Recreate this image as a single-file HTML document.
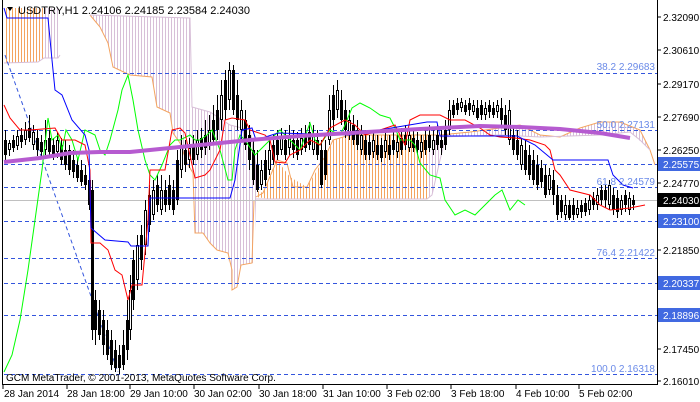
<!DOCTYPE html>
<html><head><meta charset="utf-8"><style>
html,body{margin:0;padding:0;background:#fff;width:700px;height:402px;overflow:hidden}
svg{display:block;font-family:"Liberation Sans",sans-serif}
</style></head><body>
<svg width="700" height="402" xmlns="http://www.w3.org/2000/svg">
<defs>
<pattern id="po" width="3" height="4" patternUnits="userSpaceOnUse"><rect x="0" y="0" width="1" height="4" fill="#f4a460"/></pattern>
<pattern id="pp" width="3" height="4" patternUnits="userSpaceOnUse"><rect x="0" y="0" width="1" height="4" fill="#d8bfd8"/></pattern>
</defs>
<rect width="700" height="402" fill="#fff"/>
<polygon points="4,8 44,8 44,58 38,62 4,63" fill="url(#po)"/>
<polygon points="44,8 58,8 58,58 44,58" fill="url(#pp)"/>
<polyline points="4,63 38,62 44,58 58,58 60,55" fill="none" stroke="#d8bfd8"/>
<polygon points="90,15 190,18 192,107 210,112 230,125 250,130 256,165 256,200 254,263 252,263 241,265 237,287 232,290 228,253 217,250 210,243 203,233 195,233 193,173 187,163 180,143 173,133 170,113 157,107 152,77 130,75 113,67 108,43 100,27" fill="url(#pp)"/>
<polyline points="90,15 100,27 108,43 113,67 130,75 152,77 157,107 170,113 173,133 180,143 187,163 193,173 195,233 203,233 210,243 217,250 228,253 232,270 232,290 237,287 241,265 252,263 254,200" fill="none" stroke="#f4a460"/>
<polyline points="90,15 190,18 192,107 210,112 230,125 250,130 256,165" fill="none" stroke="#d8bfd8"/>
<polygon points="256,190 263,193 277,160 290,177 307,187 325,157 333,140 350,135 427,135 427,199 270,199 256,197" fill="url(#po)"/>
<polyline points="256,197 263,193 277,160 287,163 293,187 307,187 315,170 325,157 333,140 350,135 427,135 440,135" fill="none" stroke="#f4a460"/>
<polyline points="256,199 427,199 432,195 440,160 445,140" fill="none" stroke="#d8bfd8"/>
<polygon points="427,199 432,195 440,160 445,140 427,140" fill="url(#pp)"/>
<polygon points="440,135 470,132 500,128 520,125 540,135 560,137 580,128 600,122 620,122 640,130 650,150 655,165 650,150 630,132 600,135 540,137 500,135 440,137" fill="url(#pp)"/>
<polyline points="440,135 470,132 500,128 520,125 540,135 560,137 580,128 600,122 620,122 640,130 650,150 655,165" fill="none" stroke="#f4a460"/>
<polyline points="440,137 500,135 540,137 600,135 630,132 640,140 650,150" fill="none" stroke="#d8bfd8"/>
<g stroke="#3355dd" stroke-dasharray="4,3" stroke-width="1">
<line x1="4" y1="73.5" x2="657" y2="73.5"/>
<line x1="4" y1="130.5" x2="657" y2="130.5"/>
<line x1="4" y1="164.5" x2="657" y2="164.5"/>
<line x1="4" y1="187.5" x2="657" y2="187.5"/>
<line x1="4" y1="221.5" x2="657" y2="221.5"/>
<line x1="4" y1="258.5" x2="657" y2="258.5"/>
<line x1="4" y1="283.5" x2="657" y2="283.5"/>
<line x1="4" y1="315.5" x2="657" y2="315.5"/>
<line x1="4" y1="374.5" x2="657" y2="374.5"/>
<line x1="5" y1="55" x2="118" y2="372"/>
</g>
<line x1="4" y1="200.5" x2="657" y2="200.5" stroke="#c0c0c0"/>
<!-- candles -->
<path fill="none" stroke="#000" stroke-width="1" d="M5.5 130V160M9.5 140V156M13.5 135V152M17.5 130V150M21.5 128V148M25.5 122V145M29.5 115V142M33.5 125V150M37.5 130V156M41.5 135V158M45.5 120V155M49.5 130V158M53.5 138V160M57.5 132V158M61.5 138V165M65.5 140V170M69.5 145V175M73.5 150V178M77.5 158V182M81.5 160V186M85.5 165V190M89.5 170V210M92.5 180V340M95.5 290V345M99.5 300V340M103.5 310V355M107.5 320V360M111.5 330V370M115.5 340V372M119.5 345V374M123.5 330V370M127.5 300V360M130.5 275V340M133.5 250V310M137.5 235V290M141.5 225V270M145.5 200V255M149.5 185V232M153.5 180V220M157.5 175V212M161.5 175V215M165.5 180V212M169.5 175V210M173.5 180V215M177.5 150V205M181.5 135V178M185.5 140V172M189.5 138V168M193.5 135V165M197.5 130V160M201.5 128V158M205.5 120V155M209.5 115V150M213.5 105V145M217.5 95V140M221.5 80V130M225.5 70V120M229.5 62V110M233.5 65V115M237.5 80V130M241.5 100V140M245.5 110V150M249.5 125V170M253.5 140V185M257.5 150V192M261.5 160V190M265.5 150V186M269.5 140V175M273.5 135V165M277.5 130V160M281.5 128V155M285.5 130V160M289.5 125V155M293.5 130V158M297.5 132V160M301.5 128V155M305.5 125V152M309.5 122V150M313.5 125V155M317.5 130V160M321.5 140V188M325.5 140V180M329.5 95V145M333.5 85V130M337.5 80V118M341.5 90V125M345.5 100V138M349.5 110V140M353.5 115V145M357.5 120V150M361.5 125V155M365.5 130V160M369.5 135V160M373.5 130V158M377.5 135V160M381.5 138V162M385.5 132V158M389.5 135V160M393.5 130V155M397.5 135V158M401.5 128V155M405.5 125V150M409.5 128V152M413.5 130V152M417.5 132V155M421.5 135V158M425.5 130V155M429.5 125V152M433.5 130V155M437.5 125V150M441.5 130V155M445.5 120V150M449.5 100V135M453.5 100V118M457.5 98V115M461.5 98V112M465.5 100V115M469.5 98V116M473.5 100V115M477.5 100V120M481.5 100V120M485.5 102V120M489.5 100V118M493.5 102V118M497.5 100V118M501.5 98V125M505.5 105V135M509.5 100V145M513.5 125V155M517.5 130V160M521.5 138V170M525.5 140V175M529.5 145V180M533.5 150V185M537.5 155V190M541.5 160V188M545.5 165V198M549.5 168V195M553.5 170V205M557.5 185V220M561.5 195V218M565.5 195V220M569.5 200V220M573.5 198V220M577.5 200V218M581.5 200V218M585.5 198V216M589.5 195V215M593.5 192V210M597.5 188V210M601.5 185V205M605.5 185V208M609.5 180V210M613.5 188V215M617.5 190V218M621.5 195V215M625.5 190V212M629.5 192V215M633.5 195V210"/>
<path fill="none" stroke="#000" stroke-width="3" d="M5.5 140V155M9.5 143V150M13.5 140V148M17.5 136V146M21.5 135V142M25.5 130V140M29.5 128V138M33.5 132V145M37.5 138V150M41.5 142V152M45.5 140V150M49.5 138V152M53.5 145V155M57.5 140V152M61.5 145V160M65.5 150V165M69.5 150V170M73.5 160V172M77.5 165V178M81.5 170V182M85.5 175V185M89.5 180V205M92.5 190V330M95.5 300V330M99.5 310V335M103.5 320V345M107.5 330V355M111.5 340V365M115.5 350V368M119.5 355V368M123.5 345V365M127.5 320V350M130.5 290V330M133.5 260V300M137.5 245V280M141.5 235V260M145.5 210V245M149.5 195V225M153.5 190V215M157.5 185V205M161.5 190V210M165.5 190V205M169.5 185V205M173.5 190V210M177.5 160V200M181.5 145V170M185.5 150V165M189.5 148V160M193.5 145V160M197.5 140V155M201.5 138V150M205.5 135V148M209.5 130V145M213.5 120V140M217.5 110V130M221.5 95V120M225.5 80V110M229.5 70V100M233.5 70V110M237.5 95V120M241.5 110V130M245.5 120V145M249.5 135V160M253.5 150V180M257.5 165V190M261.5 170V185M265.5 160V180M269.5 150V170M273.5 145V160M277.5 140V155M281.5 138V150M285.5 140V155M289.5 135V148M293.5 140V150M297.5 140V155M301.5 138V150M305.5 135V148M309.5 132V145M313.5 135V150M317.5 140V155M321.5 150V185M325.5 150V175M329.5 110V140M333.5 95V120M337.5 90V110M341.5 100V120M345.5 110V130M349.5 120V135M353.5 125V140M357.5 130V145M361.5 135V150M365.5 140V155M369.5 142V155M373.5 140V152M377.5 145V155M381.5 145V158M385.5 140V152M389.5 145V155M393.5 140V150M397.5 142V152M401.5 138V150M405.5 135V145M409.5 135V148M413.5 138V148M417.5 140V150M421.5 142V152M425.5 140V150M429.5 135V148M433.5 140V150M437.5 135V145M441.5 140V148M445.5 130V145M449.5 110V130M453.5 105V115M457.5 103V110M461.5 102V108M465.5 105V112M469.5 103V110M473.5 105V112M477.5 108V118M481.5 105V115M485.5 108V115M489.5 105V112M493.5 108V115M497.5 105V112M501.5 108V120M505.5 115V130M509.5 110V140M513.5 135V150M517.5 140V155M521.5 145V165M525.5 150V170M529.5 155V175M533.5 160V180M537.5 165V185M541.5 168V182M545.5 175V195M549.5 175V190M553.5 180V195M557.5 195V215M561.5 200V212M565.5 205V215M569.5 205V218M573.5 205V215M577.5 208V215M581.5 205V212M585.5 203V212M589.5 200V210M593.5 198V205M597.5 195V205M601.5 190V200M605.5 190V200M609.5 185V205M613.5 195V210M617.5 198V212M621.5 200V210M625.5 195V205M629.5 198V210M633.5 200V205"/>
<path fill="none" stroke="#fff" stroke-width="1" d="M9.5 144V149M17.5 137V145M25.5 131V139M33.5 133V144M45.5 141V149M57.5 141V151M130.5 291V329M137.5 246V279M145.5 211V244M153.5 191V214M161.5 191V209M181.5 146V169M189.5 149V159M197.5 141V154M209.5 131V144M221.5 96V119M229.5 71V99M241.5 111V129M261.5 171V184M269.5 151V169M281.5 139V149M289.5 136V147M301.5 139V149M313.5 136V149M329.5 111V139M337.5 91V109M349.5 121V134M361.5 136V149M373.5 141V151M385.5 141V151M397.5 143V151M409.5 136V147M421.5 143V151M433.5 141V149M449.5 111V129M461.5 103V107M473.5 106V111M485.5 109V114M497.5 106V111M509.5 111V139M521.5 146V164M549.5 176V189M565.5 206V214M577.5 209V214M589.5 201V209M597.5 196V204M609.5 186V204M621.5 201V209M629.5 199V209"/>
<polyline fill="none" stroke="#00ff00" points="4,372 12,355 20,320 28,270 35,220 42,170 48,118 52,140 58,135 62,150 66,130 72,140 78,160 85,130 95,135 100,150 105,155 110,140 118,110 122,90 128,75 133,100 138,130 145,160 150,175 155,180 162,165 170,145 175,140 180,140 186,137 190,135 195,140 200,140 207,135 212,130 220,150 228,180 232,180 235,150 240,135 245,140 255,155 260,150 270,140 280,130 290,140 300,150 310,123 315,140 320,145 330,130 340,135 345,125 352,108 360,103 370,108 380,115 390,118 395,128 400,140 410,140 415,145 420,163 430,175 440,178 445,200 455,215 465,210 475,215 480,210 490,200 495,195 502,190 510,210 518,200 525,205"/>
<polyline fill="none" stroke="#ff0000" points="4,105 10,118 20,130 30,130 55,128 62,140 75,140 85,145 90,170 91,243 100,243 108,250 115,270 122,275 128,300 132,285 142,285 148,220 150,170 165,170 172,130 180,128 185,133 195,178 205,175 210,170 220,150 225,120 232,118 245,120 250,130 265,135 270,140 275,162 285,163 290,155 300,150 310,140 320,145 330,128 345,120 355,125 365,135 380,130 395,125 405,145 410,120 420,115 440,115 450,120 465,120 480,128 490,135 500,137 515,138 530,140 545,145 550,150 555,170 560,175 570,190 590,195 600,205 610,210 630,208 645,205"/>
<polyline fill="none" stroke="#0000ff" points="4,8 7,18 48,18 52,60 55,90 62,95 72,120 85,135 89,150 91,228 105,240 128,242 131,246 148,246 150,198 230,198 235,180 242,130 252,128 256,140 278,133 350,135 427,122 437,122 440,136 517,136 535,145 553,160 608,160 613,175 623,185 633,188"/>
<polyline fill="none" stroke="#b65bd0" stroke-width="4" points="4,162 40,158 70,153 100,152 130,152 180,147 250,140 300,136 350,133 420,129 480,126 520,127 560,129 600,133 630,138"/>
<line x1="2.5" y1="0" x2="2.5" y2="385" stroke="#000"/>
<line x1="2" y1="384.5" x2="658" y2="384.5" stroke="#000"/>
<line x1="657.5" y1="0" x2="657.5" y2="385" stroke="#000"/>
<g stroke="#000">
<line x1="3" y1="385" x2="3" y2="389"/><line x1="67" y1="385" x2="67" y2="389"/><line x1="130" y1="385" x2="130" y2="389"/><line x1="194" y1="385" x2="194" y2="389"/><line x1="259" y1="385" x2="259" y2="389"/><line x1="323" y1="385" x2="323" y2="389"/><line x1="387" y1="385" x2="387" y2="389"/><line x1="451" y1="385" x2="451" y2="389"/><line x1="516" y1="385" x2="516" y2="389"/><line x1="579" y1="385" x2="579" y2="389"/>
<line x1="657" y1="17" x2="661" y2="17"/><line x1="657" y1="50" x2="661" y2="50"/><line x1="657" y1="84" x2="661" y2="84"/><line x1="657" y1="117" x2="661" y2="117"/><line x1="657" y1="150" x2="661" y2="150"/><line x1="657" y1="183" x2="661" y2="183"/><line x1="657" y1="250" x2="661" y2="250"/><line x1="657" y1="349" x2="661" y2="349"/><line x1="657" y1="381" x2="661" y2="381"/>
</g>
<g font-size="10" fill="#000">
<text x="4" y="397">28 Jan 2014</text><text x="67" y="397">28 Jan 18:00</text><text x="130" y="397">29 Jan 10:00</text><text x="194" y="397">30 Jan 02:00</text><text x="259" y="397">30 Jan 18:00</text><text x="323" y="397">31 Jan 10:00</text><text x="387" y="397">3 Feb 02:00</text><text x="451" y="397">3 Feb 18:00</text><text x="516" y="397">4 Feb 10:00</text><text x="579" y="397">5 Feb 02:00</text>
<text x="663" y="21">2.32090</text><text x="663" y="54">2.30610</text><text x="663" y="88">2.29170</text><text x="663" y="121">2.27690</text><text x="663" y="154">2.26250</text><text x="663" y="187">2.24770</text><text x="663" y="254">2.21850</text><text x="663" y="353">2.17450</text><text x="663" y="385">2.16010</text>
</g>
<g font-size="10" fill="#fff">
<rect x="658" y="157" width="42" height="14" fill="#4169e1"/><text x="663" y="168">2.25575</text>
<rect x="658" y="193" width="42" height="14" fill="#000"/><text x="663" y="204">2.24030</text>
<rect x="658" y="214" width="42" height="14" fill="#4169e1"/><text x="663" y="225">2.23100</text>
<rect x="658" y="276" width="42" height="14" fill="#4169e1"/><text x="663" y="287">2.20337</text>
<rect x="658" y="308" width="42" height="14" fill="#4169e1"/><text x="663" y="319">2.18896</text>
</g>
<g font-size="10" fill="#6a8ae8" text-anchor="end">
<text x="655" y="70">38.2 2.29683</text><text x="655" y="128">50.0 2.27131</text><text x="655" y="185">61.8 2.24579</text><text x="655" y="256">76.4 2.21422</text><text x="655" y="372">100.0 2.16318</text>
</g>
<polygon points="7,7 13,7 10,11" fill="#000"/>
<text x="18" y="14" font-size="11" fill="#000">USDTRY,H1  2.24106 2.24185 2.23584 2.24030</text>
<text x="6" y="381" font-size="10" fill="#000">GCM MetaTrader, © 2001-2013, MetaQuotes Software Corp.</text>
</svg>
</body></html>
